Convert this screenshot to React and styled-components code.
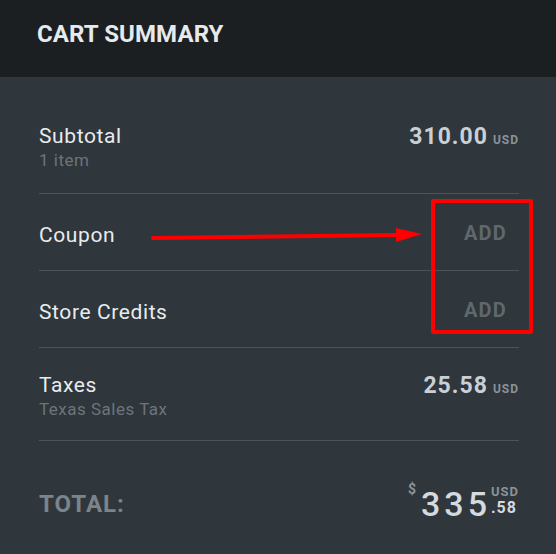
import React from 'react';
import styled, { createGlobalStyle } from 'styled-components';

const GlobalStyle = createGlobalStyle`
  html, body { margin: 0; padding: 0; background: #2f363c; }
  body { font-family: Roboto, "Liberation Sans", sans-serif; }
`;

const Page = styled.div`
  width: 556px;
  height: 554px;
  background: #2f363c;
  position: relative;
  overflow: hidden;
`;

const Header = styled.div`
  height: 77px;
  box-sizing: border-box;
  background: #1c1f22;
  display: flex;
  align-items: center;
  padding: 0 0 9px 37px;
`;

const Title = styled.h1`
  margin: 0;
  font-size: 24px;
  font-weight: 700;
  color: #e6eaec;
  letter-spacing: 0.1px;
`;

const Body = styled.div`
  padding: 20px 37px 0 39px;
`;

const Row = styled.div`
  display: flex;
  justify-content: space-between;
  align-items: ${p => (p.$top ? 'flex-start' : 'center')};
  padding: ${p => p.$pt}px 0 ${p => p.$pb}px;
  border-bottom: ${p => (p.$last ? 'none' : '1px solid #4a545b')};
`;

const LabelCol = styled.div`
  display: flex;
  flex-direction: column;
`;

const Label = styled.span`
  font-size: 21px;
  line-height: 24px;
  color: #e8ecef;
  letter-spacing: 0.6px;
`;

const Sub = styled.span`
  font-size: 17px;
  line-height: 25px;
  color: #6c757b;
  letter-spacing: 0.5px;
`;

const Amount = styled.span`
  font-size: 23px;
  line-height: 24px;
  font-weight: 700;
  color: #c9d0d5;
  letter-spacing: 1px;
  margin-top: 1px;
`;

const Cur = styled.span`
  font-size: 12px;
  font-weight: 700;
  color: #8a939a;
  margin-left: 5px;
  letter-spacing: 1px;
`;

const AddLink = styled.span`
  font-size: 20px;
  line-height: 20px;
  font-weight: 700;
  color: #5f686e;
  margin: 0 12px 4px 0;
  letter-spacing: 1.2px;
`;

const TotalLabel = styled.span`
  font-size: 24px;
  font-weight: 700;
  color: #7b8489;
  letter-spacing: 1px;
  margin-top: 11px;
`;

const TotalAmount = styled.div`
  display: flex;
  align-items: flex-start;
  color: #d5dade;
`;

const Dollar = styled.span`
  font-size: 14px;
  font-weight: 700;
  color: #8a939a;
  margin-top: 2px;
  margin-right: 5px;
`;

const Big = styled.span`
  font-size: 34px;
  line-height: 44px;
  font-weight: 500;
  letter-spacing: 4px;
  margin-top: 3px;
`;

const Stack = styled.div`
  display: flex;
  flex-direction: column;
  margin-left: 0;
  margin-top: 6px;
`;

const Small = styled.span`
  font-size: ${p => p.$size}px;
  line-height: ${p => p.$lh}px;
  font-weight: 700;
  letter-spacing: 1px;
  color: ${p => p.$c || '#8a939a'};
`;

const Highlight = styled.div`
  position: absolute;
  left: 431px;
  top: 199px;
  width: 94px;
  height: 127px;
  border: 4px solid #ff0000;
  border-radius: 2px;
`;

const Arrow = styled.svg`
  position: absolute;
  left: 148px;
  top: 224px;
`;

export default function App() {
  return (
    <Page>
      <GlobalStyle />
      <Header>
        <Title>CART SUMMARY</Title>
      </Header>
      <Body>
        <Row $pt={27} $pb={20} $top>
          <LabelCol>
            <Label>Subtotal</Label>
            <Sub>1 item</Sub>
          </LabelCol>
          <Amount>310.00<Cur>USD</Cur></Amount>
        </Row>
        <Row $pt={29} $pb={23}>
          <Label>Coupon</Label>
          <AddLink>ADD</AddLink>
        </Row>
        <Row $pt={29} $pb={23}>
          <Label>Store Credits</Label>
          <AddLink>ADD</AddLink>
        </Row>
        <Row $pt={25} $pb={18} $top>
          <LabelCol>
            <Label>Taxes</Label>
            <Sub>Texas Sales Tax</Sub>
          </LabelCol>
          <Amount>25.58<Cur>USD</Cur></Amount>
        </Row>
        <Row $pt={38} $pb={30} $top $last>
          <TotalLabel>TOTAL:</TotalLabel>
          <TotalAmount>
            <Dollar>$</Dollar>
            <Big>335</Big>
            <Stack>
              <Small $size={13} $lh={14}>USD</Small>
              <Small $size={16} $lh={18} $c="#d5dade">.58</Small>
            </Stack>
          </TotalAmount>
        </Row>
      </Body>
      <Highlight />
      <Arrow width="280" height="24" viewBox="0 0 280 24">
        <line x1="5" y1="14" x2="250" y2="11" stroke="#ff0000" strokeWidth="4" strokeLinecap="round" />
        <polygon points="248,4 274,10 248,18" fill="#ff0000" />
      </Arrow>
    </Page>
  );
}
